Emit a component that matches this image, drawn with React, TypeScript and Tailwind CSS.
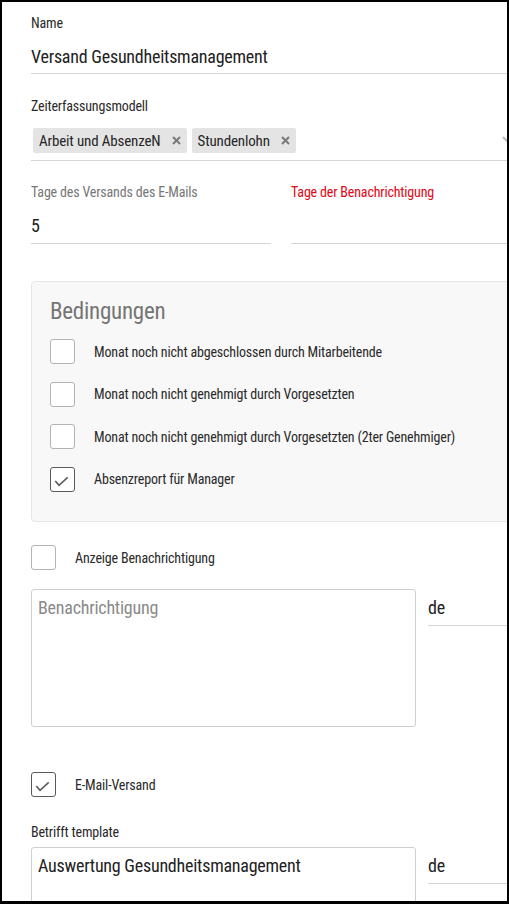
import React from "react";

type CheckProps = { checked?: boolean; label: string };

const CheckRow = ({ checked, label }: CheckProps) => (
  <div className="flex items-center">
    <div
      className={`flex h-[25px] w-[25px] shrink-0 items-center justify-center rounded-[3px] border bg-white ${
        checked ? "border-[#5a5a5a]" : "border-[#b3b3b3]"
      }`}
    >
      {checked && (
        <svg width="23" height="23" viewBox="0 0 23 23" fill="none">
          <polyline points="4.3,13 8,17.3 16.7,9.3" stroke="#5c5c5c" strokeWidth="1.6" />
        </svg>
      )}
    </div>
    <span className="ml-[19px] text-[14px] leading-[16px] tracking-[-0.012em] text-[#2a2a2a]">{label}</span>
  </div>
);

const Chip = ({ label }: { label: string }) => (
  <div className="flex h-[25px] items-center rounded-[2px] bg-[#e4e4e4] pl-[6px] pr-[6px]">
    <span className="text-[15px] leading-[18px] tracking-[-0.01em] text-[#262626]">{label}</span>
    <svg className="ml-[11px]" width="9" height="9" viewBox="0 0 9 9">
      <path d="M1 1 L8 8 M8 1 L1 8" stroke="#7a7a7a" strokeWidth="2" />
    </svg>
  </div>
);

const LangField = () => (
  <div className="flex-1 border-b border-[#d6d6d6] pt-[7px] pb-[5px] text-[18px] leading-[24px] text-[#222]">
    de
  </div>
);

export default function App() {
  return (
    <div className="h-[904px] w-[509px] overflow-hidden border-t-2 border-r-2 border-b-[3px] border-l-2 border-black bg-white font-['Roboto_Condensed',Roboto,sans-serif] tracking-[-0.015em]">
      <div className="w-[520px] pl-[29px]">
        {/* Name */}
        <div className="mt-[13px] text-[14px] leading-[16px] tracking-[-0.012em] text-[#2a2a2a]">Name</div>
        <div className="mt-[14px] border-b border-[#d6d6d6] pb-[4px] text-[18px] leading-[24px] text-[#222]">
          Versand Gesundheitsmanagement
        </div>

        {/* Zeiterfassungsmodell */}
        <div className="mt-[24px] text-[14px] leading-[16px] tracking-[-0.012em] text-[#2a2a2a]">Zeiterfassungsmodell</div>
        <div className="mt-[14px] flex items-center border-b border-[#d6d6d6] pb-[7px]">
          <div className="ml-[2px] flex gap-[5px]">
            <Chip label="Arbeit und AbsenzeN" />
            <Chip label="Stundenlohn" />
          </div>
          <svg className="mr-[4px] ml-auto" width="16" height="10" viewBox="0 0 16 10" fill="none">
            <path d="M1 1 L8 8 L15 1" stroke="#bdbdbd" strokeWidth="2" />
          </svg>
        </div>

        {/* Tage */}
        <div className="mt-[23px] flex gap-[20px]">
          <div className="w-[240px]">
            <div className="text-[14px] leading-[16px] tracking-[-0.012em] text-[#777]">Tage des Versands des E-Mails</div>
            <div className="mt-[14px] border-b border-[#d6d6d6] pb-[5px] text-[18px] leading-[24px] text-[#222]">5</div>
          </div>
          <div className="flex-1">
            <div className="text-[14px] leading-[16px] tracking-[-0.012em] text-[#e30613]">Tage der Benachrichtigung</div>
            <div className="mt-[14px] h-[30px] border-b border-[#d6d6d6]" />
          </div>
        </div>

        {/* Bedingungen */}
        <div className="mt-[37px] h-[241px] rounded-[4px] border border-[#e6e6e6] bg-[#f8f8f8] pt-[16px] pl-[18px]">
          <div className="text-[23px] leading-[28px] text-[#757575]">Bedingungen</div>
          <div className="mt-[13px] flex flex-col gap-[17.5px]">
            <CheckRow label="Monat noch nicht abgeschlossen durch Mitarbeitende" />
            <CheckRow label="Monat noch nicht genehmigt durch Vorgesetzten" />
            <CheckRow label="Monat noch nicht genehmigt durch Vorgesetzten (2ter Genehmiger)" />
            <CheckRow checked label="Absenzreport für Manager" />
          </div>
        </div>

        {/* Anzeige Benachrichtigung */}
        <div className="mt-[23px]">
          <CheckRow label="Anzeige Benachrichtigung" />
        </div>
        <div className="mt-[19px] flex gap-[12px]">
          <div className="h-[138px] w-[385px] shrink-0 rounded-[3px] border border-[#cfcfcf] bg-white pt-[6px] pl-[6px] text-[18px] leading-[24px] text-[#8a8a8a]">
            Benachrichtigung
          </div>
          <div className="flex-1">
            <LangField />
          </div>
        </div>

        {/* E-Mail-Versand */}
        <div className="mt-[45px]">
          <CheckRow checked label="E-Mail-Versand" />
        </div>
        <div className="mt-[27px] text-[14px] leading-[16px] tracking-[-0.012em] text-[#2a2a2a]">Betrifft template</div>
        <div className="mt-[7px] flex gap-[12px]">
          <div className="h-[138px] w-[385px] shrink-0 rounded-[3px] border border-[#cfcfcf] bg-white pt-[6px] pl-[6px] text-[18px] leading-[24px] text-[#222]">
            Auswertung Gesundheitsmanagement
          </div>
          <div className="flex-1">
            <LangField />
          </div>
        </div>
      </div>
    </div>
  );
}
